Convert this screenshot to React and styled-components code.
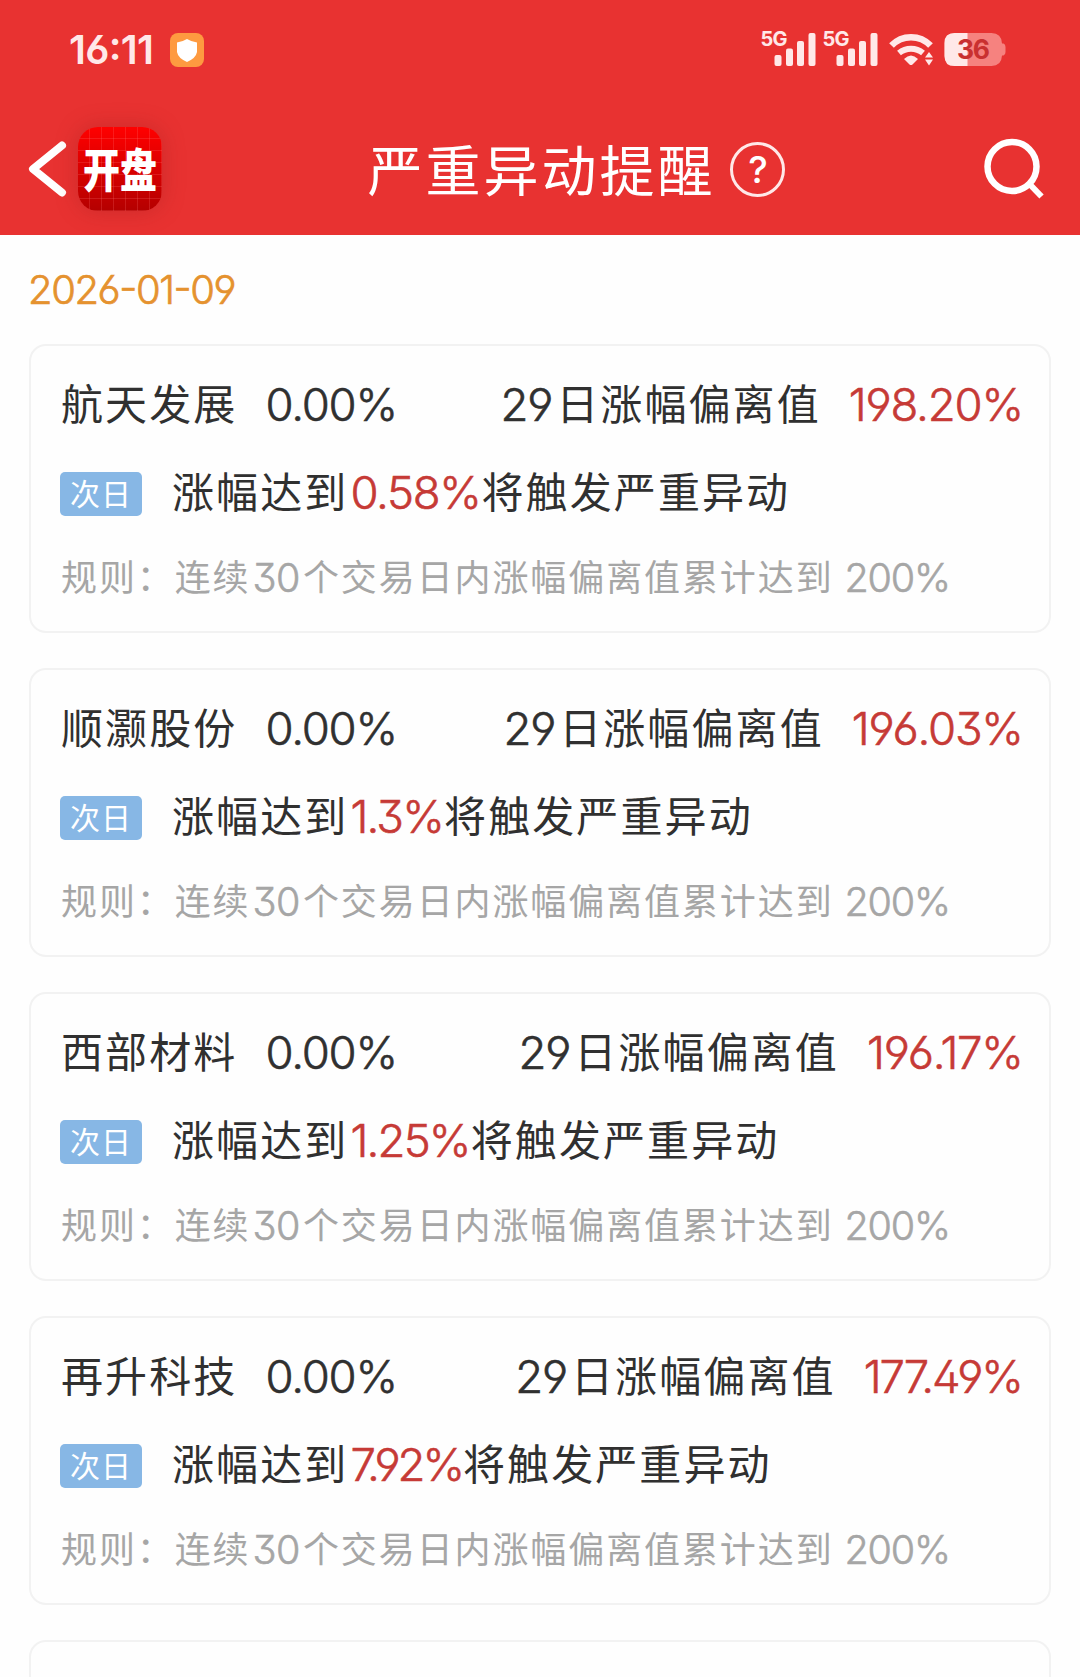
import styled, { createGlobalStyle } from "styled-components";

const GlobalStyle = createGlobalStyle`
    body {
        margin: 0;
        background: #fefefe;
        font-family: "Noto Sans CJK SC", sans-serif;
        color: #303030;
    }

    #root {
        height: 1677px;
        overflow: hidden;
    }
`

const Header = styled.header`
    height: 235px;
    background: #e83231;
    color: #fff;
`

const StatusBar = styled.div`
    display: flex;
    align-items: center;
    height: 100px;
    padding: 0 75px 0 69px;
    color: #ffe8e8;

    svg {
        overflow: visible;
    }
`

const Time = styled.span`
    font: 600 40px/1 Inter, sans-serif;
    font-feature-settings: "case", "ss01";
    letter-spacing: -0.7px;
    margin-right: 17px;
`

const StatusIcons = styled.div`
    display: flex;
    align-items: center;
    margin-left: auto;
`

const NavBar = styled.div`
    display: flex;
    align-items: center;
    justify-content: space-between;
    height: 138px;
    padding: 0 35px 0 28px;
`

const NavLeft = styled.div`
    display: flex;
    align-items: center;
    gap: 11px;
    width: 340px;
`

const Logo = styled.div`
    display: flex;
    align-items: center;
    justify-content: center;
    width: 84px;
    height: 84px;
    border-radius: 20px;
    background:
        repeating-linear-gradient(90deg, transparent 0 11px, rgba(255, 120, 120, 0.22) 11px 12px),
        repeating-linear-gradient(transparent 0 11px, rgba(255, 120, 120, 0.22) 11px 12px),
        linear-gradient(#ff0000, #b40000);
    box-shadow: 0 0 22px rgba(150, 30, 30, 0.35);
`

const LogoText = styled.span`
    font-size: 37px;
    font-weight: 900;
    line-height: 1;
    transform: translateY(-1.5px) scaleY(1.24);
`

const TitleGroup = styled.div`
    display: flex;
    flex: none;
    align-items: center;
    gap: 15px;
`

const Title = styled.h1`
    margin: -5px 0 0;
    font-size: 55px;
    font-weight: 400;
    line-height: 80px;
    letter-spacing: 3px;
    white-space: nowrap;
`

const HelpButton = styled.span`
    display: flex;
    align-items: center;
    justify-content: center;
    box-sizing: border-box;
    width: 55px;
    height: 55px;
    border: 3px solid #ffe8e8;
    border-radius: 50%;
    font: 500 37px/1 Inter, sans-serif;
`

const NavRight = styled.div`
    display: flex;
    justify-content: flex-end;
    width: 260px;
`

const DateLabel = styled.div`
    height: 109px;
    padding-left: 28px;
    font: 300 40px/110px Inter, sans-serif;
    font-feature-settings: "case", "ss01";
    letter-spacing: -1.4px;
    color: #e5922f;
    -webkit-text-stroke: 0.7px currentColor;
`

const CardList = styled.main`
    display: flex;
    flex-direction: column;
    gap: 35px;
    padding: 0 29px;
`

const Card = styled.section`
    display: flex;
    flex-direction: column;
    box-sizing: border-box;
    flex: none;
    height: 289px;
    padding: 16px 25px 0 29px;
    border: 2px solid #f2f2f2;
    border-radius: 17px;
`

const Row = styled.div`
    display: flex;
    align-items: center;
    height: 88px;
    font-size: 42px;
    letter-spacing: 2.1px;
    line-height: 88px;
    white-space: nowrap;
`

const Text = styled.span`
    margin: -5px 0 0 1px;
`

const Name = styled(Text)`
    margin-top: -8px;
`

const Num = styled.span`
    font-family: Inter, sans-serif;
    font-feature-settings: "ss01";
    font-size: ${({$size}) => $size || 45.5}px;
    font-weight: 300;
    letter-spacing: ${({$tracking}) => $tracking || -1.2}px;
    color: ${({$up}) => $up ? "#c63a36" : "inherit"};
    -webkit-text-stroke: 0.6px currentColor;
`

const InlineNum = styled(Num)`
    margin: 0 ${({$after}) => $after || 0}px 0 ${({$before}) => $before || 0}px;
    vertical-align: -0.5px;
`

const Change = styled(Num)`
    margin: -2px 0 0 28px;
`

const Deviation = styled(Text)`
    margin-left: auto;
`

const DeviationValue = styled(Num)`
    margin: -2px ${({$tracking}) => -$tracking}px 0 28px;
`

const Badge = styled.span`
    display: flex;
    align-items: center;
    justify-content: center;
    box-sizing: border-box;
    width: 82px;
    height: 44px;
    padding-bottom: 4px;
    margin-right: 29px;
    border-radius: 5px;
    background: #87b7e5;
    color: #fff;
    font-size: 30px;
    letter-spacing: 1px;
    line-height: 1;
`

const Rule = styled(Row)`
    height: 83px;
    font-size: 36px;
    letter-spacing: 1.9px;
    line-height: 83px;
    color: #a6a6a6;
`

const stocks = [
    {name: "航天发展", change: "0.00%", deviation: "198.20%", deviationTracking: -1.2, trigger: "0.58%", triggerTracking: -1.3},
    {name: "顺灏股份", change: "0.00%", deviation: "196.03%", deviationTracking: -1.2, trigger: "1.3%", triggerTracking: -1.8},
    {name: "西部材料", change: "0.00%", deviation: "196.17%", deviationTracking: -1.2, trigger: "1.25%", triggerTracking: -1.8},
    {name: "再升科技", change: "0.00%", deviation: "177.49%", deviationTracking: -2.1, trigger: "7.92%", triggerTracking: -3.1},
];

const ShieldIcon = () => (
    <svg width="34" height="34" viewBox="0 0 34 34">
        <rect width="34" height="34" rx="8" fill="#fe9a40" />
        <path d="M17 6Q22 9 27 9.500V19Q26 25 17 29Q8 25 7 19V9.500Q12 9 17 6Z" fill="#fff" />
    </svg>
);

const SignalIcon = () => (
    <svg width="62" height="40" viewBox="0 0 62 40" fill="#ffe8e8">
        <text x="0.500" y="15.500" fontFamily="Inter" fontSize="20" fontWeight="700" letterSpacing="-0.800">5G</text>
        <rect x="14.500" y="25" width="7" height="11" rx="2" />
        <rect x="26" y="18.500" width="7" height="17.500" rx="2" />
        <rect x="37" y="11" width="7" height="25" rx="2" />
        <rect x="48.500" y="3" width="7" height="33" rx="2" />
    </svg>
);

const WifiIcon = () => (
    <svg width="60" height="40" viewBox="0 0 60 40" fill="none" stroke="#ffe8e8" strokeWidth="6.500">
        <path d="M7.500 15.500A27 27 0 0 1 46.500 15.500" />
        <path d="M15 23A19 19 0 0 1 39 23" strokeWidth="6" />
        <path d="M20 29Q27 22 34 29L28.500 34.500Q27 35.500 25.500 34.500Z" fill="#ffe8e8" stroke="none" />
        <path d="M41 27.500L45 22L49 27.500ZM41 29.500L45 35.500L49 29.500Z" fill="#ffe8e8" stroke="none" />
    </svg>
);

const BatteryIcon = () => (
    <svg width="61" height="40" viewBox="0 0 61 40">
        <path d="M10.500 3H47.500Q57.500 3 58 13.500H59.500Q61.500 14 61.500 17V22Q61.500 25 59.500 25.500H58Q57.500 36 47.500 36H10.500Q0.500 36 0.500 26V13Q0.500 3 10.500 3Z" fill="#f6827f" />
        <path d="M10.500 3H23.500V36H10.500Q0.500 36 0.500 26V13Q0.500 3 10.500 3Z" fill="#ffe8e8" />
        <text x="13" y="29.200" fontFamily="Inter" fontSize="26.500" fontWeight="700" textLength="33" fill="#c93030">36</text>
    </svg>
);

const BackIcon = () => (
    <svg width="39" height="56" viewBox="0 0 39 56" fill="none" stroke="#fff" strokeWidth="8" strokeLinecap="round" strokeLinejoin="round">
        <path d="M34 4.500L5 28L34 51.500" />
    </svg>
);

const SearchIcon = () => (
    <svg width="61" height="62" viewBox="0 0 61 62" fill="none" stroke="#fff" strokeWidth="6.500">
        <circle cx="28" cy="28.500" r="24.500" />
        <path d="M45.500 46L57.500 58.500" strokeWidth="6" />
    </svg>
);

const StockCard = ({stock}) => (
    <Card>
        <Row>
            <Name>{stock.name}</Name>
            <Change>{stock.change}</Change>
            <Deviation><InlineNum $after={4}>29</InlineNum>日涨幅偏离值</Deviation>
            <DeviationValue $up $tracking={stock.deviationTracking}>{stock.deviation}</DeviationValue>
        </Row>
        <Row>
            <Badge>次日</Badge>
            <Text>
                涨幅达到
                <InlineNum $up $before={2} $after={1} $tracking={stock.triggerTracking}>{stock.trigger}</InlineNum>
                将触发严重异动
            </Text>
        </Row>
        <Rule>
            <Text>
                规则：连续<InlineNum $size={39.5} $tracking={-0.5} $before={2} $after={3}>30</InlineNum>
                个交易日内涨幅偏离值累计达到 <InlineNum $size={39.5} $before={1}>200%</InlineNum>
            </Text>
        </Rule>
    </Card>
);

const App = () => (
    <>
        <GlobalStyle />
        <Header>
            <StatusBar>
                <Time>16:11</Time>
                <ShieldIcon />
                <StatusIcons>
                    <SignalIcon />
                    <SignalIcon />
                    <WifiIcon />
                    <BatteryIcon />
                </StatusIcons>
            </StatusBar>
            <NavBar>
                <NavLeft>
                    <BackIcon />
                    <Logo><LogoText>开盘</LogoText></Logo>
                </NavLeft>
                <TitleGroup>
                    <Title>严重异动提醒</Title>
                    <HelpButton>?</HelpButton>
                </TitleGroup>
                <NavRight>
                    <SearchIcon />
                </NavRight>
            </NavBar>
        </Header>
        <DateLabel>2026-01-09</DateLabel>
        <CardList>
            {stocks.map(stock => <StockCard key={stock.name} stock={stock} />)}
            <Card />
        </CardList>
    </>
);

export default App;
